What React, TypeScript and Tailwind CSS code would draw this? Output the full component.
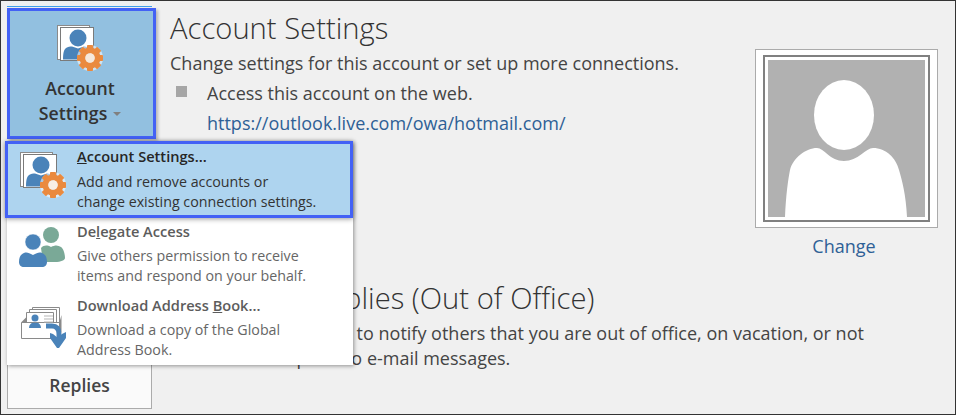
const FONT = "font-['Open_Sans','Noto_Sans',sans-serif]";

function AccountIcon({ hole }: { hole: string }) {
  return (
    <svg width={46} height={46} viewBox="0 0 46 46" className="block">
      <rect x="0.500" y="0.500" width="32" height="34" fill="#fff" stroke="#8a8a8a" />
      <rect x="3.500" y="2.500" width="33" height="33" fill="#fff" stroke="#7a7a7a" />
      <circle cx="21" cy="13" r="8.500" fill="#4a83b9" />
      <path d="M6 34.500c0-7 1-10 3-11.500 2-1.200 4-1.500 6-1.500l6 2 6-2c3 0 5 1 6 3v10z" fill="#4a83b9" />
      <circle cx="33" cy="33" r="13" fill="#fff" opacity="0.55" />
      <g fill="#ea8a3f">
        {[0, 45, 90, 135, 180, 225, 270, 315].map((a) => (
          <rect key={a} x="30" y="20" width="6" height="6" rx="0.800" transform={`rotate(${a} 33 33)`} />
        ))}
      </g>
      <circle cx="33" cy="33" r="7.500" fill="none" stroke="#ea8a3f" strokeWidth="6" />
      <circle cx="33" cy="33" r="4.800" fill={hole} />
    </svg>
  );
}

function DelegateIcon() {
  return (
    <svg width="46" height="40" viewBox="0 0 46 40" className="block">
      <circle cx="32" cy="8" r="8" fill="#7aa997" />
      <path d="M22 21c3-3 6-3 10-1 4-2 7-2 10 0 3 2 4 8 4 11 0 2-4 4-10 4H24z" fill="#7aa997" />
      <circle cx="14" cy="15" r="8" fill="#4a83b9" stroke="#fff" strokeWidth="0.500" />
      <path d="M0 35c0-5 2-8 5-9 3-1 5 0 9 2 4-2 6-3 9-2 3 1 5 4 5 9 0 3-2 5-5 5H5c-3 0-5-2-5-5z" fill="#4a83b9" />
    </svg>
  );
}

function AddressBookIcon() {
  return (
    <svg width="46" height="41" viewBox="0 0 46 41" className="block">
      <g fill="#fff" stroke="#8a8a8a">
        <path d="M11.500 0.500h27v20h-27z" />
        <path d="M8.500 2.500h27v20h-27z" />
        <path d="M5.500 5.500h27v20h-27z" />
      </g>
      <path d="M0.500 15.500h38v16h-38z" fill="#fff" stroke="#8a8a8a" />
      <path d="M0 15.500l5-5v5zM38.500 15l2-7v17l-2 5z" fill="#8a8a8a" />
      <circle cx="14" cy="11" r="3.500" fill="#4a83b9" />
      <path d="M8 21c0-4 3-6 6-5 3-1 6 1 6 5z" fill="#4a83b9" />
      <path d="M23 9h9M23 12h9M23 15h9" stroke="#b5b5b5" />
      <path d="M25 19h6c5 0 7 3 7 8v5" fill="none" stroke="#4a83b9" strokeWidth="5" />
      <path d="M29 26l3 1 5 4 4-4 4-2v6l-7 10h-2l-7-10z" fill="#4a83b9" />
    </svg>
  );
}

export default function App() {
  return (
    <div className={`${FONT} relative w-[956px] h-[415px] overflow-hidden bg-[#f0f0f0] border border-[#333333] text-[#444444]`}>
      <div className="flex flex-col h-full pl-[6px] pr-[17px]">
        <div className="flex h-[272px] shrink-0">
          <div className="w-[147px] shrink-0">
            <div className="w-[145px] mt-[5px] pt-[1px] border-t border-[#3f9fea]">
              <div className="w-[149px] h-[131px] bg-[#92c0e0] border-[3px] border-[#4361f5] shadow-[2px_2px_3px_rgba(0,0,0,0.25)] flex flex-col items-center pt-[14px] pr-[3px]">
                <AccountIcon hole="#f6e9dc" />
                <div className="mt-[5px] text-[17.700px] leading-[25px] font-semibold text-[#333333] text-center whitespace-nowrap">
                  Account<br />
                  <span className="inline-flex items-center gap-[6px]">Settings<span className="w-0 h-0 mt-[1px] border-x-[4px] border-x-transparent border-t-[4px] border-t-[#808080]" /></span>
                </div>
              </div>
            </div>
          </div>
          <div className="flex-1 pl-[16px]">
            <h1 className="text-[29.200px] leading-[36px] mt-[9px] font-light text-[#333333]">Account Settings</h1>
            <p className="text-[18px] leading-[24px] mt-[5px]">Change settings for this account or set up more connections.</p>
            <div className="flex items-start mt-[6px] ml-[6px]">
              <div className="w-[11px] h-[11px] bg-[#a6a6a6] mt-[5px] mr-[20px]" />
              <div>
                <div className="text-[18px] leading-[24px]">Access this account on the web.</div>
                <div className="text-[18px] leading-[24px] mt-[6px] text-[#2e6096]">https://outlook.live.com/owa/hotmail.com/</div>
              </div>
            </div>
          </div>
          <div className="w-[183px] pt-[48px] flex flex-col items-center shrink-0">
            <div className="w-[183px] h-[179px] bg-white border border-[#ababab] flex items-center justify-center">
              <div className="w-[167px] h-[167px] border-2 border-[#808080] bg-white p-[3px]">
                <svg viewBox="0 0 157 157" className="w-full h-full block">
                  <rect width="157" height="157" fill="#b1b1b1" />
                  <ellipse cx="76" cy="55" rx="30" ry="35" fill="#fff" />
                  <path d="M17 157C18 135 20 120 22 110C25 98 38 88 49 88C56 88 62 101 76 101C90 101 98 88 105 88C118 88 128 98 131 110C134 120 138 135 139 157z" fill="#fff" />
                </svg>
              </div>
            </div>
            <div className="text-[18px] leading-[24px] mt-[6px] pr-[5px] text-[#2e6096]">Change</div>
          </div>
        </div>
        <div className="flex flex-1">
          <div className="w-[145px] h-[136px] bg-[#fafafa] border border-[#ababab] shrink-0 flex flex-col items-center justify-end pb-[11px]">
            <div className="text-[17.500px] leading-[24px] font-semibold">Replies</div>
          </div>
          <div className="pl-[18px]">
            <h2 className="text-[29.200px] leading-[36px] mt-[7px] font-light text-[#333333] whitespace-nowrap">Automatic Replies (Out of Office)</h2>
            <p className="text-[18px] leading-[25px] mt-[5px] whitespace-nowrap">Use automatic replies to notify others that you are out of office, on vacation, or not<br />available to respond to e-mail messages.</p>
          </div>
        </div>
      </div>

      <div className="absolute left-[6px] top-[140px] w-[346px] h-[224px] bg-white shadow-[1px_1px_4px_rgba(0,0,0,0.4)] flex flex-col">
        <div className="flex h-[77px] shrink-0 -ml-[2px] bg-[#aed4ef] border-[3px] border-[#4361f5] shadow-[0_1px_5px_rgba(0,0,0,0.4)] relative">
          <div className="w-[69px] pl-[12px] pt-[8px] shrink-0"><AccountIcon hole="#f8efe6" /></div>
          <div className="pt-[2px] text-[14.250px] leading-[20px] text-[#333333] whitespace-nowrap">
            <div className="text-[14.600px] font-semibold text-[#262626]"><span className="underline">A</span>ccount Settings...</div>
            <div className="mt-[6px]">Add and remove accounts or</div>
            <div>change existing connection settings.</div>
          </div>
        </div>
        <div className="flex h-[74px] shrink-0">
          <div className="w-[70px] pl-[12px] pt-[9px] shrink-0"><DelegateIcon /></div>
          <div className="pt-[3px] text-[14.250px] leading-[20px] text-[#666666] whitespace-nowrap">
            <div className="text-[14.600px] font-semibold text-[#5c5c5c]">De<span className="underline">l</span>egate Access</div>
            <div className="mt-[5px]">Give others permission to receive</div>
            <div>items and respond on your behalf.</div>
          </div>
        </div>
        <div className="flex flex-1">
          <div className="w-[70px] pl-[14px] pt-[15px] shrink-0"><AddressBookIcon /></div>
          <div className="pt-[3px] text-[14.250px] leading-[20px] text-[#666666] whitespace-nowrap">
            <div className="text-[14.600px] font-semibold text-[#5c5c5c]">Download Address <span className="underline">B</span>ook...</div>
            <div className="mt-[5px]">Download a copy of the Global</div>
            <div>Address Book.</div>
          </div>
        </div>
      </div>
    </div>
  );
}
